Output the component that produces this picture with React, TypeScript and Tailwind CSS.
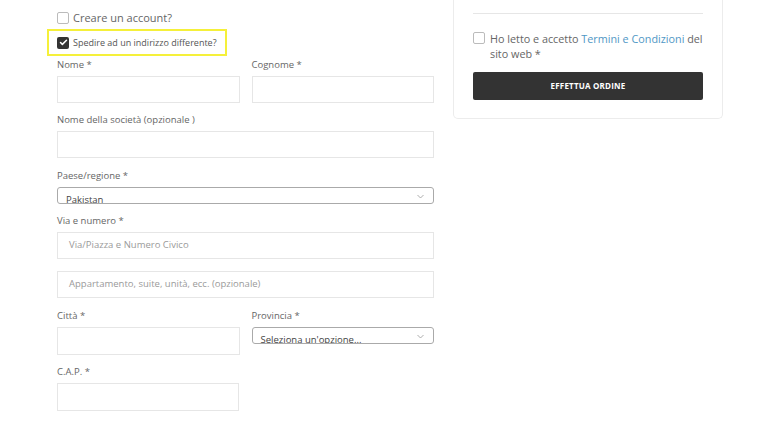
import { Check } from "lucide-react";

function Label({ children }: { children: React.ReactNode }) {
  return <div className="h-[14px] text-[9.5px] leading-[14px] text-[#666]">{children}</div>;
}

function Input({ placeholder, className = "" }: { placeholder?: string; className?: string }) {
  return (
    <div
      className={`mt-[4px] h-[27px] border border-[#e6e6e6] flex items-center px-[11px] text-[9.5px] text-[#9a9a9a] ${className}`}
    >
      {placeholder}
    </div>
  );
}

function Select({ value }: { value: string }) {
  return (
    <div className="mt-[4px] h-[17px] border border-[#aaa] rounded-[3px] relative overflow-hidden">
      <span className="absolute left-[8px] top-[5px] text-[9.5px] leading-[14px] text-[#444] whitespace-nowrap">
        {value}
      </span>
      <svg className="absolute right-[9px] top-[6px]" width="7" height="5" viewBox="0 0 7 5">
        <path d="M0.5 1 L3.5 4 L6.5 1" fill="none" stroke="#999" strokeWidth="0.8" />
      </svg>
    </div>
  );
}

function Box({ checked = false }: { checked?: boolean }) {
  return checked ? (
    <span className="w-[12px] h-[12px] rounded-[2px] bg-[#333] flex items-center justify-center shrink-0">
      <Check className="w-[9px] h-[9px] text-white" strokeWidth={4} />
    </span>
  ) : (
    <span className="block w-[12px] h-[12px] rounded-[2px] border border-[#bbb] bg-white shrink-0" />
  );
}

export default function App() {
  return (
    <div
      className="w-[768px] h-[441px] bg-white overflow-hidden flex gap-[19px] pl-[57px]"
      style={{ fontFamily: '"Open Sans", sans-serif' }}
    >
      <div className="w-[377px] flex flex-col">
        <div className="mt-[12px] h-[12px] flex items-center gap-[4px]">
          <Box />
          <span className="text-[11px] text-[#666] whitespace-nowrap">Creare un account?</span>
        </div>
        <div className="mt-[5px] -ml-[10px] w-[180px] h-[27px] border-2 border-[#f5f03a] flex items-center gap-[4px] pl-[8px]">
          <Box checked />
          <span className="text-[9px] text-[#555] whitespace-nowrap">Spedire ad un indirizzo differente?</span>
        </div>

        <div className="mt-[2px] flex gap-[12px]">
          <div className="flex-1">
            <Label>Nome *</Label>
            <Input />
          </div>
          <div className="flex-1">
            <Label>Cognome *</Label>
            <Input />
          </div>
        </div>

        <div className="mt-[10px]">
          <Label>Nome della società (opzionale )</Label>
          <Input />
        </div>

        <div className="mt-[11px]">
          <Label>Paese/regione *</Label>
          <Select value="Pakistan" />
        </div>

        <div className="mt-[10px]">
          <Label>Via e numero *</Label>
          <Input placeholder="Via/Piazza e Numero Civico" />
          <Input placeholder="Appartamento, suite, unità, ecc. (opzionale)" className="mt-[12px]" />
        </div>

        <div className="mt-[11px] flex gap-[12px]">
          <div className="flex-1">
            <Label>Città *</Label>
            <Input className="h-[28px]" />
          </div>
          <div className="flex-1">
            <Label>Provincia *</Label>
            <Select value="Seleziona un'opzione..." />
          </div>
        </div>

        <div className="mt-[10px] w-[182px]">
          <Label>C.A.P. *</Label>
          <Input className="h-[28px]" />
        </div>
      </div>

      <div className="w-[270px] self-start border border-t-0 border-[#ececec] rounded-b-[5px] px-[19px] pb-[18px]">
        <div className="mt-[13px] h-px bg-[#e6e6e6]" />
        <div className="mt-[17px] flex gap-[5px]">
          <div className="mt-[1px] shrink-0">
            <Box />
          </div>
          <div className="text-[10.8px] leading-[15px] text-[#666]">
            Ho letto e accetto <span className="text-[#4f97c5]">Termini e Condizioni</span> del sito web *
          </div>
        </div>
        <button className="mt-[11px] w-full h-[28px] bg-[#333] rounded-[2px] text-white text-[8px] font-bold tracking-[0.2px]">
          EFFETTUA ORDINE
        </button>
      </div>
    </div>
  );
}
